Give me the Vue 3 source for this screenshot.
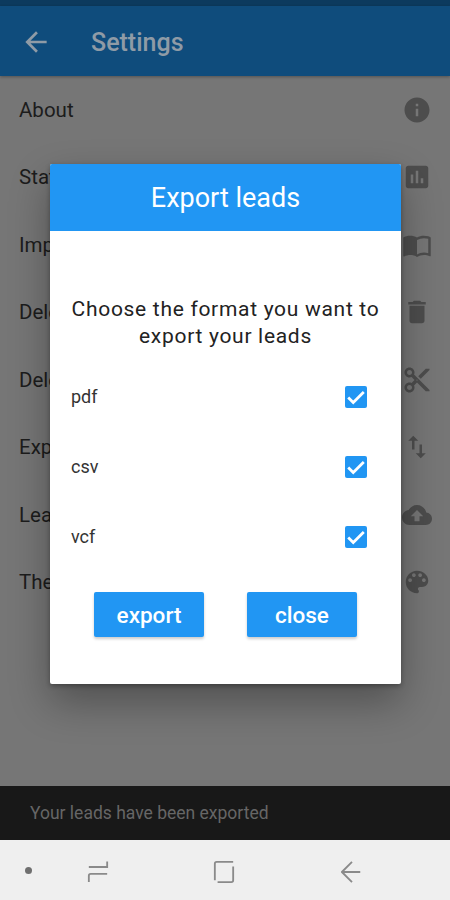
<template>
  <div class="screen">
    <div class="status-bar"></div>

    <header class="app-bar">
      <svg class="back" viewBox="0 0 24 24"><path d="M20 11H7.83l5.59-5.59L12 4l-8 8 8 8 1.41-1.41L7.83 13H20v-2z" /></svg>
      <span class="title">Settings</span>
    </header>

    <ul class="settings">
      <li v-for="item in items" :key="item.label" class="row">
        <span>{{ item.label }}</span>
        <svg class="row-icon" viewBox="0 0 24 24"><path :d="item.icon" /></svg>
      </li>
    </ul>

    <div class="snackbar">Your leads have been exported</div>

    <nav class="nav-bar">
      <span class="dot"></span>
      <svg class="nav-icon recents" viewBox="0 0 24 24">
        <path d="M2 6.5H22V.5M22 14H4q-2 0-2 2v7" />
      </svg>
      <svg class="nav-icon square" viewBox="0 0 24 24">
        <path d="M22 1H4Q2 1 2 3V21M5 23H20q2 0 2-2V6" />
      </svg>
      <svg class="nav-icon arrow" viewBox="0 0 24 24">
        <path d="M21 12H1M12 1 1 12l11 11" />
      </svg>
    </nav>

    <div class="dialog">
      <div class="dialog-head">Export leads</div>
      <div class="dialog-body">
        <p class="prompt">Choose the format you want to export your leads</p>
        <div v-for="format in formats" :key="format" class="format">
          <span class="format-name">{{ format }}</span>
          <span class="checkbox">
            <svg viewBox="0 0 24 24"><path d="M3.5 12.5l5.5 5.5L20.5 6.5" /></svg>
          </span>
        </div>
        <div class="actions">
          <button class="btn">export</button>
          <button class="btn">close</button>
        </div>
      </div>
    </div>
  </div>
</template>

<script setup>
const items = [
  { label: 'About', icon: 'M12 2C6.48 2 2 6.48 2 12s4.48 10 10 10 10-4.48 10-10S17.52 2 12 2zm1 15h-2v-6h2v6zm0-8h-2V7h2v2z' },
  { label: 'Statistics', icon: 'M19 3H5c-1.1 0-2 .9-2 2v14c0 1.1.9 2 2 2h14c1.1 0 2-.9 2-2V5c0-1.1-.9-2-2-2zM9 17H7v-7h2v7zm4 0h-2V7h2v10zm4 0h-2v-4h2v4z' },
  { label: 'Import leads', icon: 'M21 5c-1.11-.35-2.33-.5-3.5-.5-1.95 0-4.05.4-5.5 1.5-1.45-1.1-3.55-1.5-5.5-1.5S2.45 4.9 1 6v14.65c0 .25.25.5.5.5.1 0 .15-.05.25-.05C3.1 20.45 5.05 20 6.5 20c1.95 0 4.05.4 5.5 1.5 1.35-.85 3.8-1.5 5.5-1.5 1.65 0 3.35.3 4.75 1.05.1.05.15.05.25.05.25 0 .5-.25.5-.5V6c-.6-.45-1.25-.75-2-1zm0 13.5c-1.1-.35-2.3-.5-3.5-.5-1.7 0-4.15.65-5.5 1.5V8c1.35-.85 3.8-1.5 5.5-1.5 1.2 0 2.4.15 3.5.5v11.5z' },
  { label: 'Delete all leads', icon: 'M6 19c0 1.1.9 2 2 2h8c1.1 0 2-.9 2-2V7H6v12zM19 4h-3.5l-1-1h-5l-1 1H5v2h14V4z' },
  { label: 'Delete old leads', icon: 'M9.64 7.64c.23-.5.36-1.05.36-1.64 0-2.21-1.79-4-4-4S2 3.79 2 6s1.79 4 4 4c.59 0 1.14-.13 1.64-.36L10 12l-2.36 2.36C7.14 14.13 6.59 14 6 14c-2.21 0-4 1.79-4 4s1.79 4 4 4 4-1.79 4-4c0-.59-.13-1.14-.36-1.64L12 14l7 7h3v-1L9.64 7.64zM6 8c-1.1 0-2-.89-2-2s.9-2 2-2 2 .89 2 2-.9 2-2 2zm0 12c-1.1 0-2-.89-2-2s.9-2 2-2 2 .89 2 2-.9 2-2 2zm6-7.5c-.28 0-.5-.22-.5-.5s.22-.5.5-.5.5.22.5.5-.22.5-.5.5zM19 3l-6 6 2 2 7-7V3z' },
  { label: 'Export leads', icon: 'M9 3L5 6.99h3V14h2V6.99h3L9 3zm7 14.01V10h-2v7.01h-3L15 21l4-3.99h-3z' },
  { label: 'Leads backup', icon: 'M19.35 10.04C18.67 6.59 15.64 4 12 4 9.11 4 6.6 5.64 5.35 8.04 2.34 8.36 0 10.91 0 14c0 3.31 2.69 6 6 6h13c2.76 0 5-2.24 5-5 0-2.64-2.05-4.78-4.65-4.96zM14 13v4h-4v-4H7l5-5 5 5h-3z' },
  { label: 'Theme', icon: 'M12 3c-4.97 0-9 4.03-9 9s4.03 9 9 9c.83 0 1.5-.67 1.5-1.5 0-.39-.15-.74-.39-1.01-.23-.26-.38-.61-.38-.99 0-.83.67-1.5 1.5-1.5H16c2.76 0 5-2.24 5-5 0-4.42-4.03-8-9-8zm-5.5 9c-.83 0-1.5-.67-1.5-1.5S5.67 9 6.5 9 8 9.67 8 10.5 7.33 12 6.5 12zm3-4C8.67 8 8 7.33 8 6.5S8.67 5 9.5 5s1.5.67 1.5 1.5S10.33 8 9.5 8zm5 0c-.83 0-1.5-.67-1.5-1.5S13.67 5 14.5 5s1.5.67 1.5 1.5S15.33 8 14.5 8zm3 4c-.83 0-1.5-.67-1.5-1.5S16.67 9 17.5 9s1.5.67 1.5 1.5-.67 1.5-1.5 1.5z' }
]

const formats = ['pdf', 'csv', 'vcf']
</script>

<style scoped>
.screen {
  position: relative;
  width: 450px;
  height: 900px;
  display: flex;
  flex-direction: column;
  overflow: hidden;
  background: #767676;
  font-family: Roboto, "Liberation Sans", sans-serif;
  color: #1c1c1c;
}

.status-bar {
  height: 6px;
  background: #0c3a5e;
}

.app-bar {
  height: 70px;
  box-sizing: border-box;
  display: flex;
  align-items: center;
  padding: 2px 0 0 20px;
  background: #0f4c7c;
  box-shadow: 0 1px 3px rgba(0, 0, 0, 0.3);
}

.back {
  width: 32px;
  height: 32px;
  fill: #8f9ba6;
}

.title {
  margin-left: 39px;
  font-size: 25px;
  font-weight: 500;
  color: #8f9ba6;
}

.settings {
  flex: 1;
  margin: 0;
  padding: 0;
  list-style: none;
}

.row {
  height: 67.5px;
  display: flex;
  align-items: center;
  justify-content: space-between;
  padding: 0 18px 0 19px;
  font-size: 20.5px;
}

.row-icon {
  width: 30px;
  height: 30px;
  fill: #4d4d4d;
}

.snackbar {
  height: 54px;
  display: flex;
  align-items: center;
  padding-left: 30px;
  background: #181818;
  color: #666;
  font-size: 17.5px;
}

.nav-bar {
  height: 60px;
  display: flex;
  align-items: center;
  background: #efefef;
  position: relative;
}

.dot {
  width: 7px;
  height: 7px;
  margin-left: 25px;
  border-radius: 50%;
  background: #6f6f6f;
}

.nav-icon {
  position: absolute;
  top: 21px;
  width: 22px;
  height: 22px;
  fill: none;
  stroke: #8a8a8a;
  stroke-width: 2;
}

.recents {
  left: 87px;
}

.square {
  left: 213px;
}

.arrow {
  left: 341px;
}

.dialog {
  position: absolute;
  left: 50px;
  top: 164px;
  width: 351px;
  height: 520px;
  display: flex;
  flex-direction: column;
  background: #fff;
  border-radius: 2px;
  box-shadow: 0 18px 40px rgba(0, 0, 0, 0.32), 0 2px 5px rgba(0, 0, 0, 0.3);
  overflow: hidden;
}

.dialog-head {
  height: 67px;
  display: flex;
  align-items: center;
  justify-content: center;
  background: #2196f3;
  color: #fff;
  font-size: 27px;
}

.dialog-body {
  flex: 1;
  padding: 0 21px;
}

.prompt {
  margin: 65px -4px 12px;
  font-size: 21px;
  line-height: 27px;
  letter-spacing: 0.7px;
  text-align: center;
  color: #222;
}

.format {
  height: 70px;
  display: flex;
  align-items: center;
  justify-content: space-between;
  padding-right: 13px;
  font-size: 18px;
  color: #333;
}

.format-name {
  margin-top: -2px;
}

.checkbox {
  width: 22px;
  height: 22px;
  display: flex;
  border-radius: 2px;
  background: #2196f3;
}

.checkbox svg {
  width: 22px;
  height: 22px;
  fill: none;
  stroke: #fff;
  stroke-width: 3;
}

.actions {
  display: flex;
  justify-content: space-between;
  margin-top: 20px;
  padding: 0 23px;
}

.btn {
  width: 110px;
  height: 45px;
  border: 0;
  border-radius: 2px;
  background: #2196f3;
  color: #fff;
  font-family: inherit;
  font-size: 22.5px;
  font-weight: 500;
  box-shadow: 0 2px 3px rgba(0, 0, 0, 0.2);
}
</style>
